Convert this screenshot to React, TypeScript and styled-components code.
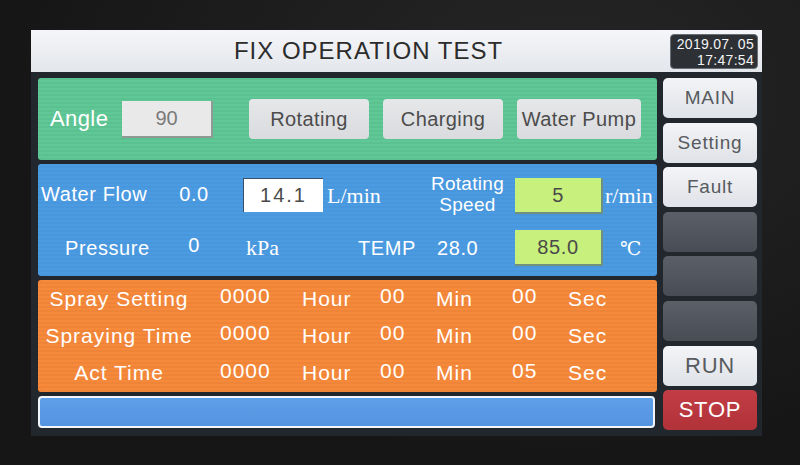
import React from 'react';
import styled, { createGlobalStyle, css } from 'styled-components';

const Global = createGlobalStyle`
  html, body {
    margin: 0;
    padding: 0;
    background: #171717;
  }
  body {
    width: 800px;
    height: 465px;
    overflow: hidden;
    font-family: "Liberation Sans", Arial, sans-serif;
  }
`;

const scan = css`
  background-image: repeating-linear-gradient(
    0deg,
    rgba(0, 0, 0, 0.035) 0px,
    rgba(0, 0, 0, 0.035) 2px,
    transparent 2px,
    transparent 4px
  );
`;

type Variant = 'light' | 'dark' | 'stop';

interface CellProps {
  col: number;
  align?: 'left' | 'center';
  pad?: number;
}

const S = {
  Bezel: styled.div`
    width: 800px;
    height: 465px;
    box-sizing: border-box;
    padding: 30px 38px 0 31px;
    background: radial-gradient(ellipse at 70% 20%, #262626 0%, #161616 70%);
  `,
  Screen: styled.div`
    width: 731px;
    height: 406px;
    background: #22262d;
    display: flex;
    flex-direction: column;
  `,
  TitleBar: styled.header`
    height: 42px;
    flex: 0 0 42px;
    display: flex;
    align-items: center;
    padding-right: 4px;
    background: linear-gradient(#f5f6f9, #e3e6eb);
  `,
  Title: styled.div`
    flex: 1;
    text-align: center;
    padding-left: 36px;
    font-size: 24px;
    letter-spacing: 1px;
    color: #2c2c2c;
  `,
  Clock: styled.div`
    flex: 0 0 88px;
    height: 35px;
    box-sizing: border-box;
    padding: 1px 3px 0 0;
    border-radius: 4px;
    border: 1px solid #6a6e75;
    background: #2d3035;
    color: #f4f4f4;
    font-size: 14px;
    line-height: 16px;
    letter-spacing: 0.3px;
    text-align: right;
    white-space: nowrap;
  `,
  Body: styled.div`
    display: flex;
    gap: 6px;
    padding: 6px 5px 0 7px;
  `,
  Main: styled.div`
    width: 619px;
    display: flex;
    flex-direction: column;
    gap: 4px;
  `,
  Side: styled.div`
    width: 94px;
    display: flex;
    flex-direction: column;
    gap: 4.6px;
  `,
  GreenPanel: styled.section`
    height: 82px;
    display: flex;
    align-items: center;
    padding-left: 12px;
    border-radius: 3px;
    background-color: #5fc896;
    ${scan}
  `,
  AngleLabel: styled.span`
    width: 60px;
    margin-right: 12px;
    font-size: 22px;
    letter-spacing: 0.4px;
    color: #ffffff;
  `,
  AngleBox: styled.div`
    width: 91px;
    height: 37px;
    box-sizing: border-box;
    margin-right: 36px;
    display: flex;
    align-items: center;
    justify-content: center;
    background: #e9e9e9;
    border-right: 2px solid #8f9a94;
    border-bottom: 2px solid #8f9a94;
    font-size: 20px;
    color: #7a7a7a;
  `,
  Buttons: styled.div`
    display: flex;
    gap: 14px;
  `,
  Button: styled.button<{ wide?: boolean }>`
    width: ${p => (p.wide ? 124 : 120)}px;
    height: 40px;
    border: none;
    border-radius: 4px;
    background: linear-gradient(#e6e7e9, #d9dbde);
    font-family: "Liberation Sans", Arial, sans-serif;
    font-size: 20px;
    letter-spacing: 0.4px;
    color: #4c4c4c;
    padding: 0;
  `,
  BluePanel: styled.section`
    height: 112px;
    box-sizing: border-box;
    padding: 14px 0 10px;
    display: grid;
    grid-template-columns: 134px 44px 27px 82px 95px 95px 88px 54px;
    grid-template-rows: 36px 36px;
    row-gap: 16px;
    border-radius: 3px;
    background-color: #4b9be3;
    overflow: hidden;
    ${scan}
  `,
  Cell: styled.div<CellProps & { up?: number }>`
    grid-column: ${p => p.col};
    display: flex;
    align-items: center;
    justify-content: ${p => (p.align === 'center' ? 'center' : 'flex-start')};
    padding-left: ${p => p.pad ?? 0}px;
    margin-top: ${p => -(p.up ?? 0)}px;
    white-space: nowrap;
    overflow: hidden;
    font-size: 20px;
    letter-spacing: 0.6px;
    color: #ffffff;
  `,
  TwoLine: styled.div`
    grid-column: 6;
    display: flex;
    flex-direction: column;
    align-items: center;
    justify-content: center;
    font-size: 19px;
    line-height: 21px;
    letter-spacing: 0.3px;
    color: #ffffff;
    margin-top: -4px;
  `,
  Unit: styled.div<CellProps & { small?: boolean }>`
    grid-column: ${p => p.col};
    display: flex;
    align-items: center;
    padding-left: ${p => p.pad ?? 0}px;
    white-space: nowrap;
    overflow: hidden;
    font-family: "Liberation Serif", "DejaVu Serif", "Times New Roman", serif;
    font-size: ${p => (p.small ? 19 : 22)}px;
    color: #ffffff;
  `,
  WhiteInput: styled.div`
    grid-column: 4;
    width: 80px;
    height: 34px;
    box-sizing: border-box;
    display: flex;
    align-items: center;
    justify-content: center;
    background: #ffffff;
    border-top: 1px solid #3a4e66;
    border-left: 1px solid #3a4e66;
    font-size: 20px;
    letter-spacing: 2px;
    color: #4a4a4a;
  `,
  GreenInput: styled.div`
    grid-column: 7;
    height: 36px;
    display: flex;
    align-items: center;
    justify-content: center;
    background: #c8f07c;
    border-right: 2px solid #6f8f7f;
    border-bottom: 2px solid #6f8f7f;
    box-sizing: border-box;
    font-size: 20px;
    letter-spacing: 0.6px;
    color: #4a4a4a;
  `,
  OrangePanel: styled.section`
    height: 112px;
    display: grid;
    grid-template-columns: 162px 100px 78px 56px 76px 56px 1fr;
    grid-template-rows: repeat(3, 1fr);
    border-radius: 3px;
    background-color: #f7893a;
    ${scan}
  `,
  TimeCell: styled.div<{ raised?: boolean; align?: 'left' | 'center'; pad?: number }>`
    display: flex;
    align-items: center;
    justify-content: ${p => (p.align === 'center' ? 'center' : 'flex-start')};
    padding-left: ${p => p.pad ?? 0}px;
    margin-top: ${p => (p.raised ? -5 : 0)}px;
    white-space: nowrap;
    font-size: 21px;
    letter-spacing: 1px;
    color: #ffffff;
  `,
  StatusBar: styled.div`
    height: 32px;
    box-sizing: border-box;
    width: 617px;
    border: 2px solid #f2f5fa;
    border-radius: 4px;
    background: linear-gradient(#5f9fe9, #5493e0);
  `,
  SideButton: styled.button<{ variant: Variant; big?: boolean }>`
    height: 40px;
    border: none;
    border-radius: 5px;
    padding: 0;
    font-family: "Liberation Sans", Arial, sans-serif;
    letter-spacing: 0.8px;
    ${p =>
      p.variant === 'light'
        ? css`
            background: linear-gradient(#f3f4f7, #dfe2e7);
            color: #575b60;
            font-size: ${p.big ? 22 : 19}px;
          `
        : p.variant === 'dark'
          ? css`
              background: linear-gradient(#5a5f68, #484c55);
            `
          : css`
              background: linear-gradient(#c23d45, #b13238);
              color: #ffffff;
              font-size: 22px;
            `}
  `,
};

const TIME_ROWS = [
  { label: 'Spray Setting', h: '0000', m: '00', s: '00' },
  { label: 'Spraying Time', h: '0000', m: '00', s: '00' },
  { label: 'Act Time', h: '0000', m: '00', s: '05' },
];

const SIDE_BUTTONS: { label: string; variant: Variant; big?: boolean }[] = [
  { label: 'MAIN', variant: 'light' },
  { label: 'Setting', variant: 'light' },
  { label: 'Fault', variant: 'light' },
  { label: '', variant: 'dark' },
  { label: '', variant: 'dark' },
  { label: '', variant: 'dark' },
  { label: 'RUN', variant: 'light', big: true },
  { label: 'STOP', variant: 'stop' },
];

const App: React.FC = () => {
  return (
    <S.Bezel>
      <Global />
      <S.Screen>
        <S.TitleBar>
          <S.Title>FIX OPERATION TEST</S.Title>
          <S.Clock>
            2019.07. 05
            <br />
            17:47:54
          </S.Clock>
        </S.TitleBar>
        <S.Body>
          <S.Main>
            <S.GreenPanel>
              <S.AngleLabel>Angle</S.AngleLabel>
              <S.AngleBox>90</S.AngleBox>
              <S.Buttons>
                <S.Button>Rotating</S.Button>
                <S.Button>Charging</S.Button>
                <S.Button wide>Water Pump</S.Button>
              </S.Buttons>
            </S.GreenPanel>

            <S.BluePanel>
              <S.Cell col={1} pad={3} up={3}>Water Flow</S.Cell>
              <S.Cell col={2} align="center" up={3}>0.0</S.Cell>
              <S.WhiteInput>14.1</S.WhiteInput>
              <S.Unit col={5} pad={2}>L/min</S.Unit>
              <S.TwoLine>
                <span>Rotating</span>
                <span>Speed</span>
              </S.TwoLine>
              <S.GreenInput>5</S.GreenInput>
              <S.Unit col={8} pad={2}>r/min</S.Unit>

              <S.Cell col={1} pad={27}>Pressure</S.Cell>
              <S.Cell col={2} align="center" up={6}>0</S.Cell>
              <S.Unit col={4} pad={3}>kPa</S.Unit>
              <S.Cell col={5} pad={33}>TEMP</S.Cell>
              <S.Cell col={6} pad={17}>28.0</S.Cell>
              <S.GreenInput>85.0</S.GreenInput>
              <S.Unit col={8} pad={17} small>℃</S.Unit>
            </S.BluePanel>

            <S.OrangePanel>
              {TIME_ROWS.map(row => (
                <React.Fragment key={row.label}>
                  <S.TimeCell align="center">{row.label}</S.TimeCell>
                  <S.TimeCell pad={20} raised>{row.h}</S.TimeCell>
                  <S.TimeCell pad={2}>Hour</S.TimeCell>
                  <S.TimeCell pad={2} raised>{row.m}</S.TimeCell>
                  <S.TimeCell pad={2}>Min</S.TimeCell>
                  <S.TimeCell pad={2} raised>{row.s}</S.TimeCell>
                  <S.TimeCell pad={2}>Sec</S.TimeCell>
                </React.Fragment>
              ))}
            </S.OrangePanel>

            <S.StatusBar />
          </S.Main>

          <S.Side>
            {SIDE_BUTTONS.map((b, i) => (
              <S.SideButton key={i} variant={b.variant} big={b.big}>
                {b.label}
              </S.SideButton>
            ))}
          </S.Side>
        </S.Body>
      </S.Screen>
    </S.Bezel>
  );
};

export default App;
